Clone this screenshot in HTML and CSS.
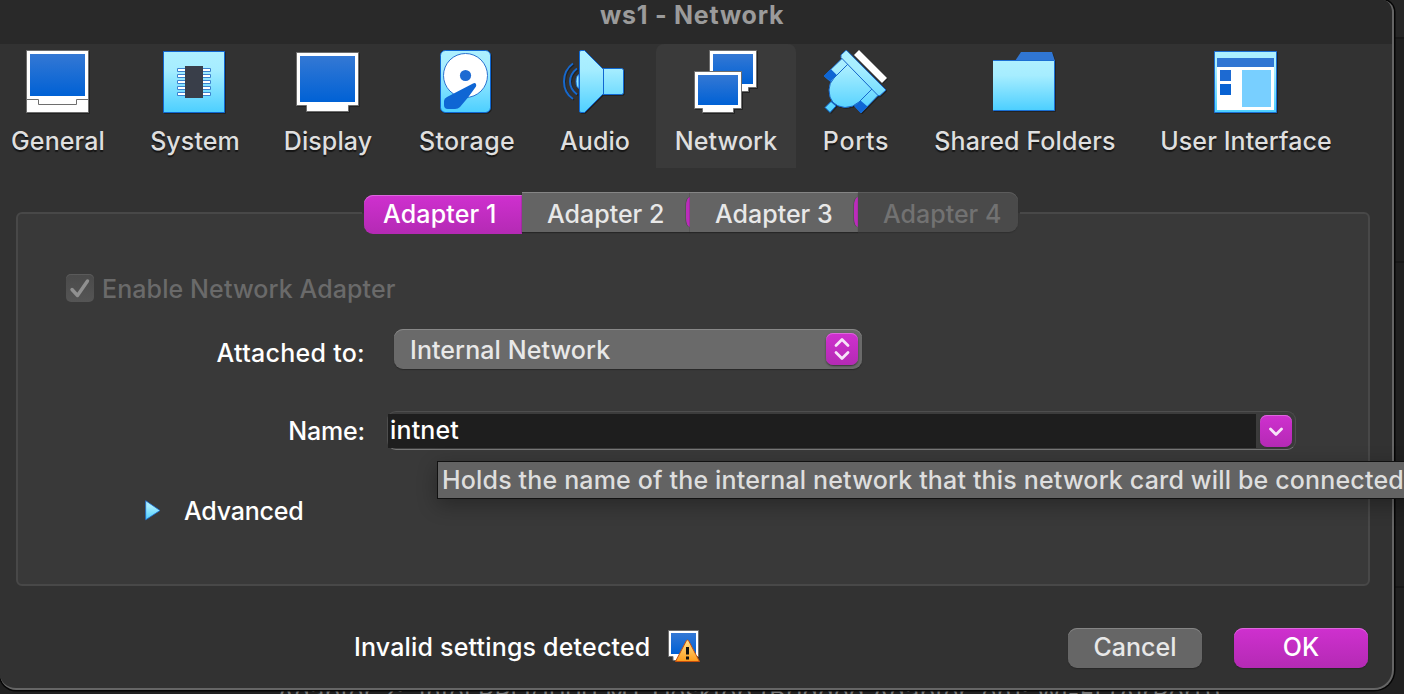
FILE: index.html
```html
<!DOCTYPE html>
<html lang="en">
<head>
<meta charset="utf-8">
<title>ws1 - Network</title>
<link rel="stylesheet" href="styles.css">
</head>
<body>
<svg class="defs" width="0" height="0" aria-hidden="true">
  <defs>
    <linearGradient id="screen" x1="0" y1="0" x2="0" y2="1"><stop offset="0" stop-color="#3478d4"/><stop offset="1" stop-color="#0061d5"/></linearGradient>
    <linearGradient id="sky" x1="0" y1="0" x2="0" y2="1"><stop offset="0" stop-color="#aef0ff"/><stop offset=".3" stop-color="#a6edff"/><stop offset="1" stop-color="#4ccfff"/></linearGradient>
    <linearGradient id="skyU" gradientUnits="userSpaceOnUse" x1="0" y1="0" x2="0" y2="64"><stop offset="0" stop-color="#aef0ff"/><stop offset=".3" stop-color="#a6edff"/><stop offset="1" stop-color="#4ccfff"/></linearGradient>
    <linearGradient id="warn" x1="0" y1="0" x2="0" y2="1"><stop offset="0" stop-color="#ffe08a"/><stop offset="1" stop-color="#ff9d1c"/></linearGradient>
  </defs>
</svg>
<div class="behind"><p class="behind-text">Adapter 2:&nbsp; Intel PRO/1000 MT Desktop (Bridged Adapter, en1: Wi-Fi (AirPort))</p></div>
<main class="window">
  <header class="titlebar"><h1 class="title">ws1 - Network</h1></header>
  <nav class="toolbar">
    <a class="tool general">
      <svg width="64" height="64" viewBox="0 0 64 64"><path d="M.5.5h62v62H.5z" fill="#fff" stroke="#6e6e6e"/><path d="M4 4h55v42H4z" fill="url(#screen)"/><path d="M1 49.500h11.500v5h38v-5H62" fill="none" stroke="#6e6e6e"/></svg>
      <span>General</span></a>
    <a class="tool system">
      <svg width="64" height="64" viewBox="1 0 64 64"><path d="M1.500 1.500h61v61h-61z" fill="url(#sky)" stroke="#0f67d2"/><g fill="#fff" stroke="#3a83cf"><path d="M15.500 18.500h9v3h-9zM15.500 24.500h9v3h-9zM15.500 30.500h9v3h-9zM15.500 36.500h9v3h-9zM15.500 42.500h9v3h-9zM39.500 18.500h9v3h-9zM39.500 24.500h9v3h-9zM39.500 30.500h9v3h-9zM39.500 36.500h9v3h-9zM39.500 42.500h9v3h-9z"/></g><path d="M23 16h18v32H23z" fill="#393e49"/></svg>
      <span>System</span></a>
    <a class="tool display">
      <svg width="64" height="64" viewBox="0 0 64 64"><path d="M.5 2.500h62v53h-10v6h-42v-6H.5z" fill="#fff" stroke="#6e6e6e"/><path d="M4 6h55v46H4z" fill="url(#screen)"/></svg>
      <span>Display</span></a>
    <a class="tool storage">
      <svg width="54" height="64" viewBox="0 0 54 64"><rect x=".5" y=".5" width="50" height="62" rx="5" fill="url(#sky)" stroke="#0f67d2"/><circle cx="25.500" cy="25.500" r="22" fill="#fff" stroke="#2a72d0"/><circle cx="25.500" cy="25.500" r="5.600" fill="#1d6ad2"/><path d="M33 33.500C35 32 37 34 36 36.500L28 47.500L20 57Q18 59 15 59H8Q4 59 4 55V51Q4 48.500 7 47Z" fill="#0f66d4"/></svg>
      <span>Storage</span></a>
    <a class="tool audio">
      <svg width="64" height="64" viewBox="2 0 64 64"><path d="M12 13.500Q3 20 3 31.500T12 49M16 18.500Q9 24 9 31.500T16 44.500" fill="none" stroke="#1768cc" stroke-width="2"/><path d="M18 24.500q-3 1-3 7t3 7z" fill="url(#skyU)" stroke="#1768cc"/><path d="M18.500 2q0-1.500 1.500-1.500h3.500l18 18H60.500q2 0 2 2v22q0 2-2 2H41.500l-18 18H20q-1.500 0-1.500-1.500zM42.500 18.500v26" fill="url(#skyU)" stroke="#0f67d2"/></svg>
      <span>Audio</span></a>
    <a class="tool network active">
      <svg width="64" height="64" viewBox="0 0 64 64"><path d="M15.500.5h47v37h-8v4h-31v-4h-8z" fill="#fff" stroke="#6e6e6e"/><path d="M19 4h40v30H19z" fill="url(#screen)"/><path d="M.5 21.500h47v37h-8v4h-31v-4h-8z" fill="#fff" stroke="#6e6e6e"/><path d="M4 25h40v30H4z" fill="url(#screen)"/></svg>
      <span>Network</span></a>
    <a class="tool ports">
      <svg width="64" height="64" viewBox="1 0 64 64"><path d="M31 5l5-5 28 28-5 5z" fill="#fff"/><path d="M1 26l18.500-18 7 7L8 32zM31.500 56l18-18 7 6-18.500 19z" fill="url(#skyU)" stroke="#1768cc"/><path d="M.8 26l7-7 6 6-6 6.500zM31.500 56l6-5.500 7 6-7 6.500z" fill="#0f66d4"/><path d="M2 57.500l6-6 5 4.500-6 6.500z" fill="url(#skyU)" stroke="#0f67d2"/><path d="M25 14L49 39 36 52Q30 57.500 22 57.500Q6 56 6 40Q6 33 11 28Z" fill="url(#skyU)" stroke="#1768cc"/><path d="M18 5.500q0-.5 .5-1L22.500.7q.7-.5 1.500 0l39 39.300-6 5.500q-1 .5-2 0L18 7.500z" fill="url(#skyU)" stroke="#1768cc"/></svg>
      <span>Ports</span></a>
    <a class="tool folders">
      <svg width="64" height="64" viewBox="1 0 64 64"><path d="M23 11l6-9h31l3 9z" fill="#3076d3"/><path d="M.5 10.500h62v50H.5z" fill="url(#sky)" stroke="#1a6fd4"/></svg>
      <span>Shared Folders</span></a>
    <a class="tool interface">
      <svg width="64" height="64" viewBox="0 0 64 64"><path d="M.5 1.500h62v61H.5z" fill="url(#sky)" stroke="#1a6fd4"/><path d="M3 8h57v52H3z" fill="#fff"/><path d="M3 8h57v9H3z" fill="#3076d3"/><path d="M6 20h11v11H6z" fill="#1d6ad2"/><path d="M6 34h11v11H6z" fill="#0862d2"/><path d="M28 20h29v37H28z" fill="#78cfff"/></svg>
      <span>User Interface</span></a>
  </nav>
  <div class="tabs">
    <button class="tab t1 selected"><span>Adapter 1</span></button>
    <button class="tab t2"><span>Adapter 2</span></button>
    <button class="tab t3"><span>Adapter 3</span></button>
    <button class="tab t4"><span>Adapter 4</span></button>
  </div>
  <section class="panel">
    <div class="row check-row">
      <span class="checkbox"><svg width="28" height="28" viewBox="0 0 28 28"><path d="M6 15.500l5.500 6L21.500 7" fill="none" stroke="#909090" stroke-width="3.400" stroke-linecap="round" stroke-linejoin="round"/></svg></span>
      <span class="enable">Enable Network Adapter</span>
    </div>
    <div class="row attach-row">
      <span class="label attached">Attached to:</span>
      <div class="select"><span class="value">Internal Network</span>
        <span class="knob"><svg width="32" height="32" viewBox="0 0 32 32"><path d="M10 12.500l6-6 6 6M10 19.500l6 6 6-6" fill="none" stroke="#f7e3f8" stroke-width="2.800" stroke-linecap="round" stroke-linejoin="round"/></svg></span></div>
    </div>
    <div class="row name-row">
      <span class="label name">Name:</span>
      <div class="combo"><div class="field"><span>intnet</span></div>
        <span class="knob"><svg width="32" height="32" viewBox="0 0 32 32"><path d="M10.500 14l5.500 5.500 5.500-5.500" fill="none" stroke="#f7e3f8" stroke-width="2.800" stroke-linecap="round" stroke-linejoin="round"/></svg></span></div>
    </div>
    <div class="row adv-row">
      <svg width="16" height="21" viewBox="0 0 16 21"><path d="M.7.7L15 10.500.7 19.800z" fill="url(#sky)" stroke="#1a6fd4" stroke-width=".8"/></svg>
      <span class="advanced">Advanced</span>
    </div>
  </section>
  <footer class="footer">
    <span class="status">Invalid settings detected</span>
    <svg class="status-icon" width="34" height="34" viewBox="0 0 34 34"><path d="M.5.5h30v26h-4v4H5v-4H.5z" fill="#fff" stroke="#6e6e6e"/><path d="M3 3h25v21H3z" fill="url(#screen)"/><path d="M18.500 10.500q1-1 2 0L31.500 31.500H7.500z" fill="url(#warn)" stroke="#c9500c"/><path d="M18 17h3v7.500h-3zM18 26.500h3v3h-3z" fill="#111"/></svg>
    <button class="btn cancel"><span>Cancel</span></button>
    <button class="btn ok"><span>OK</span></button>
  </footer>
</main>
<div class="tooltip"><span>Holds the name of the internal network that this network card will be connected</span></div>
</body>
</html>
```
FILE: styles.css
```css
* { box-sizing: border-box; }
body { margin: 0; width: 1404px; height: 694px; overflow: hidden; position: relative; background: #1f1f1f; font: 500 25px/30px Inter, "Liberation Sans", sans-serif; color: #fff; }
button { border: 0; margin: 0; padding: 0; font: inherit; color: inherit; }
svg { display: block; flex: none; }
span, h1, p { white-space: nowrap; }
.defs { position: absolute; }
.behind { position: absolute; left: 0; top: 0; width: 1404px; height: 694px; overflow: hidden; background: linear-gradient(#262626 0 37px, #1a1a1a 37px 39px, #202020 39px 261px, #181818 261px 263px, #202020 263px 586px, #181818 586px 588px, #202020 588px); }
.behind-text { position: absolute; left: 277px; top: 678px; margin: 0; color: #777; font-weight: 400; letter-spacing: .37px; }
.window { position: relative; width: 1394px; height: 690px; overflow: hidden; border: solid #656565; border-width: 0 2px 2px 0; border-radius: 0 12px 20px 16px; background: #323232; box-shadow: 0 0 0 1.5px #050505; }
.titlebar { height: 44px; background: #292929; }
.title { margin: 0 0 0 600px; font-size: 25px; line-height: 30px; font-weight: 700; letter-spacing: .75px; color: #9b9b9b; }
.toolbar { display: flex; height: 124px; color: #dfdfdf; text-shadow: 0 1.500px 1px #151515; letter-spacing: .1px; }
.tool { display: flex; flex-direction: column; align-items: center; padding-top: 6px; gap: 12px; height: 124px; }
.tool svg { filter: drop-shadow(1px 1px 0 #222); }
.general { width: 116px; }
.system { width: 120px; margin-left: 19px; }
.display { width: 120px; margin-left: 13px; }
.storage { width: 120px; margin-left: 19px; letter-spacing: .4px; }
.audio { width: 100px; margin-left: 18px; }
.network { width: 140px; margin-left: 11px; }
.ports { width: 100px; margin-left: 10px; letter-spacing: .7px; }
.folders { width: 200px; margin-left: 19px; }
.interface { width: 200px; margin-left: 21px; }
.active { background: #3a3a3a; border-radius: 8px 8px 0 0; text-shadow: none; }
.tabs { position: relative; z-index: 1; display: flex; margin: 24px 0 0 362px; width: 658px; height: 42px; padding: 0 2px; background: linear-gradient(#323232 0 21px, #393939 21px); }
.tab { height: 40px; background: #646464; box-shadow: inset 0 1px #858585, 0 1px 1px #272727; color: #e8e8e8; text-align: left; display: flex; padding-top: 7px; }
.selected { margin-top: 3px; height: 39px; padding-top: 4px; border-radius: 9px 0 0 9px; background: linear-gradient(#cf30cf, #b42ab4); box-shadow: inset 0 1px #dc67dc; color: #fff; letter-spacing: .15px; }
.t1 { width: 158px; padding-left: 19px; }
.t2 { width: 168px; padding-left: 25px; }
.t3 { width: 168px; padding-left: 25px; }
.t4 { width: 160px; padding-left: 25px; border-radius: 0 9px 9px 0; background: #4a4a4a; box-shadow: inset 0 1px #5c5c5c, 0 1px 1px #303030; color: #727272; }
.t2::after, .t3::after { content: ""; margin: -2px 0 0 auto; width: 4px; height: 30px; border-radius: 4px 0 0 4px / 9px 0 0 9px; background: #bb2cbb; box-shadow: -1px 0 #555; }
.panel { margin: -22px 0 0 16px; width: 1354px; height: 374px; padding-top: 60px; border: 2px solid #484848; border-radius: 6px; background: #393939; }
.row { display: flex; }
.check-row { padding-left: 48px; height: 55px; color: #6a6a6a; letter-spacing: .1px; }
.checkbox { width: 28px; height: 28px; border-radius: 5px; background: linear-gradient(#4a4a4a, #555); box-shadow: inset 0 1px #5a5a5a; }
.enable { margin-left: 8px; }
.label { width: 347px; text-align: right; }
.attach-row { height: 82px; }
.attach-row .label { padding-top: 9px; letter-spacing: .28px; }
.select { display: flex; width: 468px; height: 40px; margin-left: 29px; padding: 4px 4px 4px 16px; border-radius: 9px; background: #6a6a6a; box-shadow: inset 0 1px #888, 0 1px 1px #292929; color: #e8e8e8; }
.value { margin-top: 2px; flex: 1; letter-spacing: .08px; }
.knob { width: 32px; height: 32px; border-radius: 7px; background: linear-gradient(#cf30cf, #b42ab4); box-shadow: inset 0 1px #dc67dc, 0 1px 2px #333; }
.name-row { height: 89px; }
.name-row .label { padding-top: 5px; letter-spacing: -.15px; }
.combo { display: flex; justify-content: space-between; width: 909px; height: 39px; margin-left: 22px; border: 1px solid #4e4e4e; border-bottom: 1px solid #777; border-radius: 9px; background: #3c3c3c; padding: 2px 3px 1px 0; }
.field { width: 868px; height: 34px; padding: 1px 0 0 2px; background: #1e1e1e; letter-spacing: .15px; }
.combo .knob { margin-top: 1px; }
.adv-row { padding-left: 127px; }
.advanced { margin: -4px 0 0 23px; letter-spacing: -.2px; }
.footer { display: flex; padding: 42px 0 0 354px; }
.status { margin-top: 4px; width: 296px; letter-spacing: .18px; }
.status-icon { margin: 2px 0 0 18px; }
.btn { width: 134px; height: 40px; border-radius: 9px; text-align: center; padding-bottom: 2px; }
.cancel { margin-left: 366px; background: #666; box-shadow: inset 0 1px #858585, 0 1px 1px #272727; color: #e8e8e8; }
.ok { margin-left: 32px; background: linear-gradient(#cf30cf, #b42ab4); box-shadow: inset 0 1px #dc67dc, 0 1px 1px #272727; }
.tooltip { position: absolute; left: 437px; top: 461px; width: 980px; height: 38px; padding: 3px 0 0 4px; border: 1px solid #111; background: #636363; color: #dedede; letter-spacing: .165px; box-shadow: 0 6px 20px rgba(0,0,0,.3); }
```
